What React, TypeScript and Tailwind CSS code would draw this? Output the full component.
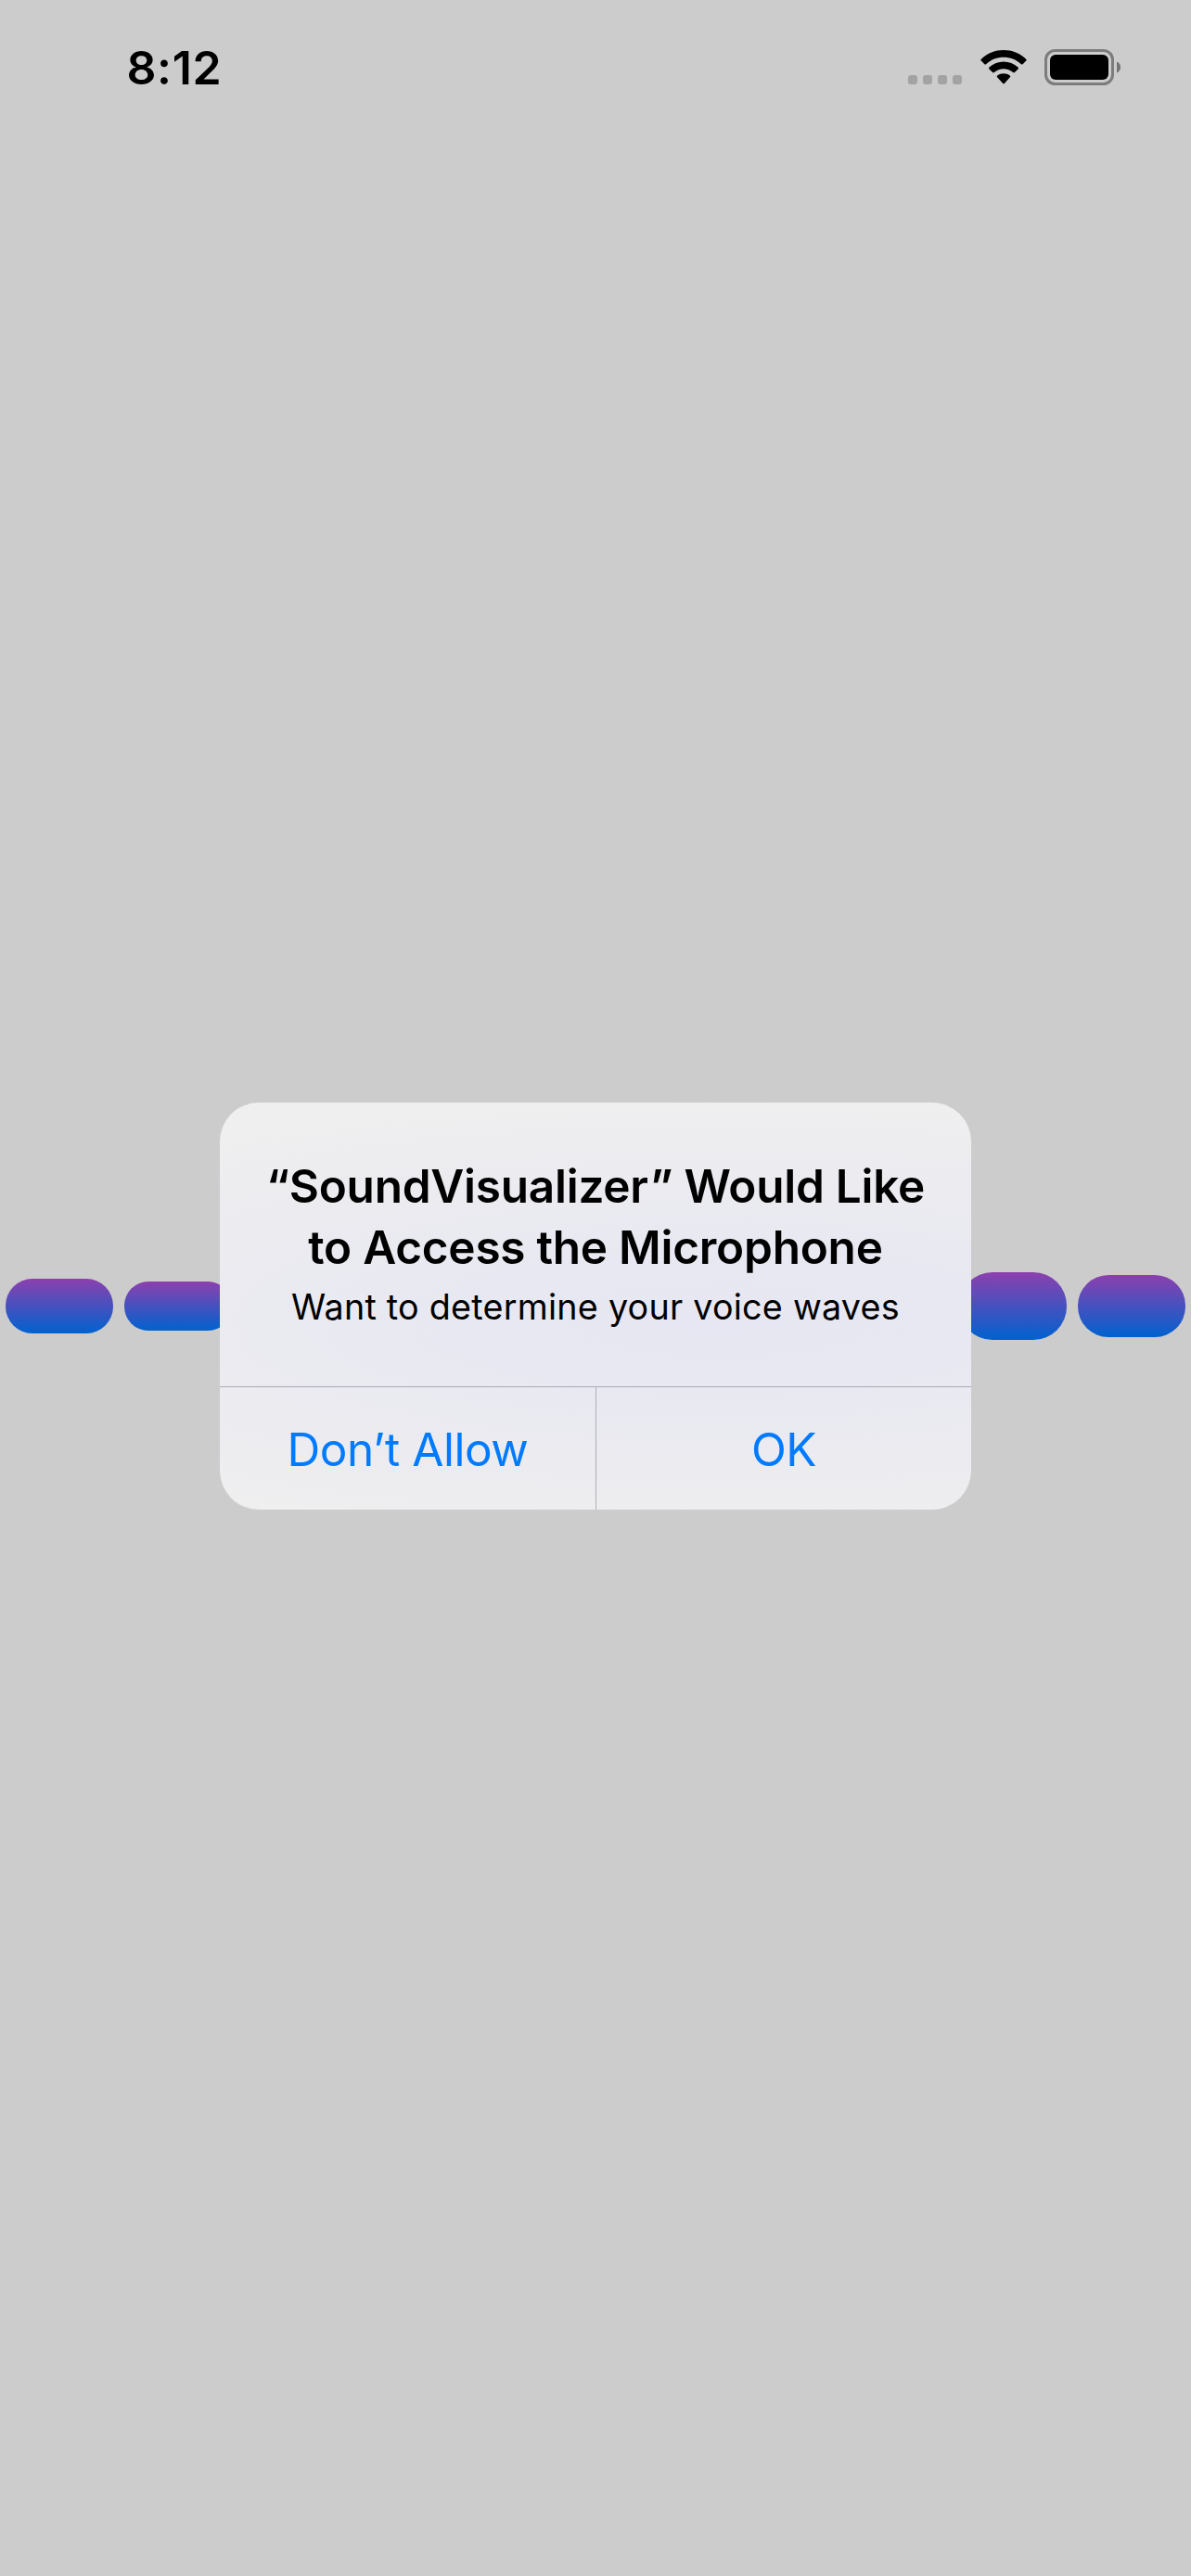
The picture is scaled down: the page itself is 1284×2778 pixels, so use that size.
import React from "react";

type Bar = { id: number; size: string };

const bars: Bar[] = [
  { id: 0, size: "h-[59px] rounded-[29px]" },
  { id: 1, size: "h-[53px] rounded-[26px]" },
  { id: 2, size: "h-[59px] rounded-[29px]" },
  { id: 3, size: "h-[65px] rounded-[32px]" },
  { id: 4, size: "h-[73px] rounded-[36px]" },
  { id: 5, size: "h-[67px] rounded-[33px]" },
  { id: 6, size: "h-[59px] rounded-[29px]" },
  { id: 7, size: "h-[65px] rounded-[32px]" },
  { id: 8, size: "h-[73px] rounded-[36px]" },
  { id: 9, size: "h-[67px] rounded-[33px]" },
];

function StatusBar() {
  return (
    <header className="flex h-[146px] items-start justify-between pl-[136.5px] pr-[76px]">
      <time className="mt-[43px] text-[50px] font-semibold leading-[60px] tracking-[0.6px]">8:12</time>
      <div className="mt-[53px] flex items-start">
        <div className="mt-[28px] flex gap-[6px]">
          {[0, 1, 2, 3].map((dot) => (
            <span key={dot} className="size-[10px] rounded-[3px] bg-[#a3a3a3]" />
          ))}
        </div>
        <svg className="ml-[19.5px] mt-[1px] h-[37px] w-[50px]" viewBox="0 0 50 37">
          <path d="M.8 9.8C14-3.2 36-3.2 49.2 9.8Q50.1 10.7 49.2 11.6L45.6 15.2Q44.8 16 43.9 15.2C33.5 5.4 16.5 5.4 6.1 15.2Q5.2 16 4.4 15.2L.8 11.6Q-.1 10.7.8 9.8Z" />
          <path d="M9.5 18.6C18.1 10.6 31.9 10.6 40.5 18.6Q41.5 19.5 40.6 20.4L36.9 24.1Q36.1 24.8 35.2 24.1C29.5 18.9 20.5 18.9 14.8 24.1Q13.9 24.8 13.1 24.1L9.4 20.4Q8.5 19.5 9.5 18.6Z" />
          <path d="M18.2 27.5C22 24.5 28 24.5 31.8 27.5Q32.8 28.4 31.9 29.3L25.8 35.9Q25 36.8 24.2 35.9L18.1 29.3Q17.2 28.4 18.2 27.5Z" />
        </svg>
        <svg className="ml-[19.5px] h-[39px] w-[82px]" viewBox="0 0 82 39">
          <rect x="1.5" y="1.5" width="72" height="36" rx="10" fill="none" stroke="#7c7c7c" strokeWidth="3" />
          <rect x="6" y="6" width="63" height="27" rx="6" />
          <path d="M78 13.5Q82 15.4 82 19.5Q82 23.6 78 25.5Z" fill="#737373" />
        </svg>
      </div>
    </header>
  );
}

function PermissionAlert() {
  return (
    <section
      role="dialog"
      className="absolute left-[237px] top-[1189px] flex h-[439px] w-[810px] flex-col overflow-hidden rounded-[42px] bg-[#efeff0] bg-[radial-gradient(ellipse_950px_235px_at_540px_235px,#e7e7f3_0%,#e8e8f2_30%,#ebebf0_65%,#efeff0_100%)] text-center"
    >
      <div className="flex h-[306px] flex-col items-center whitespace-nowrap pt-[57px]">
        <h1 className="text-[49.5px] font-semibold leading-[66px] tracking-[-0.25px]">
          “SoundVisualizer<span className="ml-[2px]">”</span> Would Like
          <br />
          to Access the Microphone
        </h1>
        <p className="mt-[4px] text-[37.7px] leading-[54px] tracking-[0.24px]">Want to determine your voice waves</p>
      </div>
      <div className="flex h-[133px] border-t border-[#a9abb8] text-[49.5px] leading-[60px] text-[#007aff]">
        <button className="w-[405px] pt-[2px] tracking-[-0.45px]">Don’t Allow</button>
        <button className="flex-1 border-l border-[#adaeb7] pt-[2px] tracking-[-0.5px]">OK</button>
      </div>
    </section>
  );
}

export default function App() {
  return (
    <main className="relative flex h-[2778px] w-[1284px] flex-col overflow-hidden bg-[#cccccc] font-['Inter',sans-serif] text-black">
      <StatusBar />
      <div className="mt-[1226px] flex h-[73px] items-center justify-between px-[6px]">
        {bars.map((bar) => (
          <span key={bar.id} className={`w-[116px] bg-[linear-gradient(to_bottom,#8c40ae,#0062cf)] ${bar.size}`} />
        ))}
      </div>
      <PermissionAlert />
    </main>
  );
}
